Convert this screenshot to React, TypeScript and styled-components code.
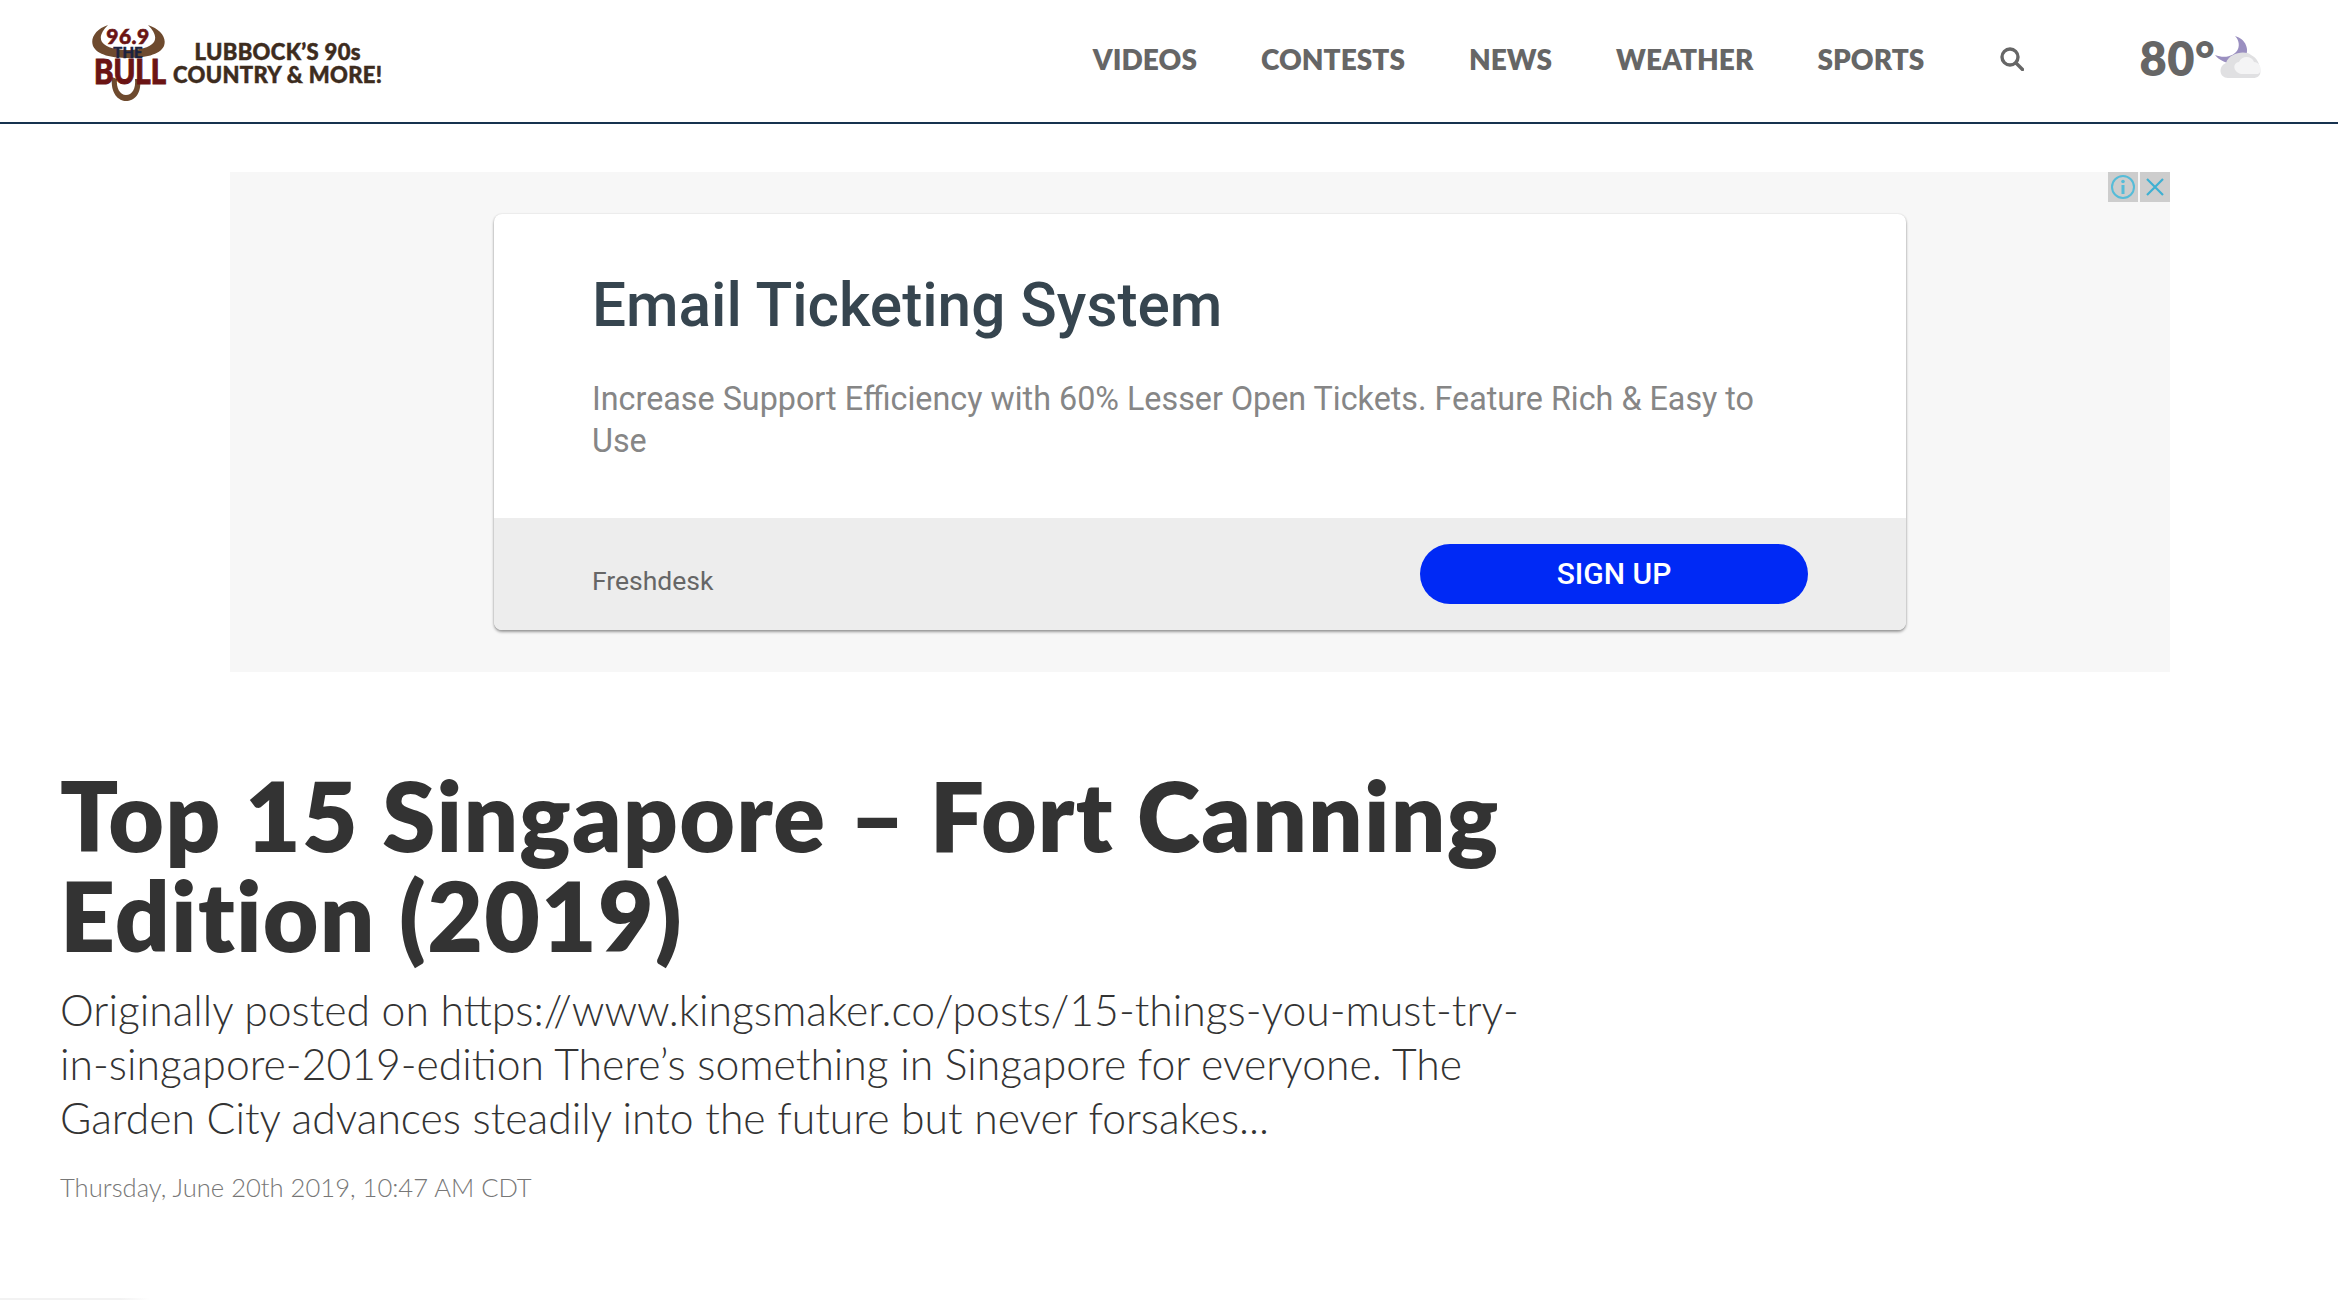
import React from "react";
import styled, { createGlobalStyle } from "styled-components";

const Global = createGlobalStyle`
  html, body { margin: 0; padding: 0; background: #fff; overflow: hidden; }
  * { box-sizing: border-box; }
`;
const Page = styled.div`
  width: 2338px;
  height: 1300px;
  display: flex;
  flex-direction: column;
  position: relative;
  overflow: hidden;
`;
const Header = styled.header`
  height: 124px;
  flex: none;
  border-bottom: 2px solid #17324f;
  display: flex;
  align-items: center;
  padding: 0 76px 0 92px;
`;
const LogoLink = styled.a`
  display: flex;
  align-items: center;
  gap: 5px;
  margin-top: 4px;
`;
const Tagline = styled.div`
  font: 900 22px/23px Lato, sans-serif;
  color: #3d2c1e;
  text-align: center;
  letter-spacing: 0.35px;
  -webkit-text-stroke: 0.5px #3d2c1e;
`;
const Nav = styled.nav`
  margin-left: auto;
  margin-top: -4px;
  display: flex;
  align-items: center;
  gap: 64px;
`;
const NavLink = styled.a`
  font: 800 28px/1 Lato, sans-serif;
  color: #666;
  letter-spacing: 0.05px;
`;
const SearchIcon = styled.svg`
  width: 24px;
  height: 24px;
  margin-left: 12px;
`;
const Weather = styled.div`
  margin-left: 115px;
  margin-top: -6px;
  display: flex;
  align-items: center;
`;
const Temp = styled.span`
  font: 800 47px/1 Lato, sans-serif;
  color: #666;
  letter-spacing: 0.5px;
`;
const Main = styled.main`
  display: flex;
  flex-direction: column;
  padding: 48px 0 0 60px;
`;
const AdSlot = styled.section`
  width: 1940px;
  height: 500px;
  margin-left: 170px;
  background: #f7f7f7;
  display: flex;
  justify-content: center;
  align-items: flex-start;
  padding-top: 42px;
  position: relative;
`;
const AdBadges = styled.div`
  position: absolute;
  top: 0;
  right: 0;
  display: flex;
  gap: 2px;
`;
const AdBadge = styled.div`
  width: 30px;
  height: 30px;
  background: #cdcdcd;
  display: flex;
  align-items: center;
  justify-content: center;
`;
const AdCard = styled.div`
  width: 1412px;
  height: 416px;
  border-radius: 8px;
  background: #fff;
  box-shadow: 0 2px 3px rgba(0,0,0,.38), 0 0 2px rgba(0,0,0,.12);
  display: flex;
  flex-direction: column;
  overflow: hidden;
`;
const AdBody = styled.div`
  height: 304px;
  padding: 57px 98px 0;
`;
const AdTitle = styled.h2`
  margin: 0;
  font: 500 60.3px/70px Roboto, sans-serif;
  color: #36454f;
`;
const AdText = styled.p`
  margin: 37px 0 0;
  max-width: 1200px;
  font: 400 32.3px/42px Roboto, sans-serif;
  color: #868686;
`;
const AdFooter = styled.div`
  flex: 1;
  background: #ededed;
  display: flex;
  align-items: center;
  justify-content: space-between;
  padding: 0 98px;
`;
const Sponsor = styled.span`
  font: 400 26.5px/1 Roboto, sans-serif;
  color: #666;
  margin-top: 14px;
`;
const Cta = styled.a`
  width: 388px;
  height: 60px;
  border-radius: 30px;
  background: #0029f5;
  color: #fff;
  display: flex;
  align-items: center;
  justify-content: center;
  font: 500 30px/1 Roboto, sans-serif;
  margin-top: -1px;
`;
const Title = styled.h1`
  margin: 93px 0 0;
  width: 1500px;
  font: 800 96px/100px Lato, sans-serif;
  color: #333;
  letter-spacing: 1.2px;
`;
const Summary = styled.p`
  margin: 18px 0 0;
  width: 1490px;
  font: 300 42.7px/54px Lato, sans-serif;
  color: #333;
`;
const DateLine = styled.div`
  margin-top: 26px;
  font: 300 25.6px/32px Lato, sans-serif;
  color: #777;
`;
const Corner = styled.div`
  position: absolute;
  left: 0;
  bottom: 0;
  width: 150px;
  height: 2px;
  background: linear-gradient(90deg, #f2f2f2 80%, #fff);
`;

const Logo = () => (
  <svg width="76" height="78" viewBox="0 0 76 78">
    <path d="M16 1 C4 5 -2 14 1 22 C5 31 20 34 36 34 C52 34 68 31 72 22 C75 13 68 5 56 1 C62 7 65 13 62 18 C58 24 46 26 36 26 C26 26 14 24 10 18 C7 13 10 7 16 1Z" fill="#6e4a2e" />
    <path d="M20 53 C18 70 27 77 34 77 C42 77 50 70 48 55 L43 55 C44 65 40 71 34 71 C28 71 24 64 25 55Z" fill="#6e4a2e" />
    <text x="36" y="20" textAnchor="middle" fontFamily="Lato, sans-serif" fontWeight="900" fontSize="21" fill="#6b1414" stroke="#6b1414" strokeWidth="0.6" letterSpacing="0.5">96.9</text>
    <text x="36" y="34" textAnchor="middle" fontFamily="Lato, sans-serif" fontWeight="900" fontSize="15" fill="#1b2240" stroke="#1b2240" strokeWidth="0.4">THE</text>
    <text x="2" y="60" fontFamily="Lato, sans-serif" fontWeight="900" fontSize="34" fill="#6b1414" stroke="#6b1414" strokeWidth="1" textLength="72" lengthAdjust="spacingAndGlyphs">BULL</text>
  </svg>
);

const MoonCloud = () => (
  <svg width="47" height="44" viewBox="0 0 47 44">
    <path d="M20 0 C31 3 35 14 30 22 C24 30 8 29 0 19 C10 23 20 20 23 13 C25 8 23 3 20 0Z" fill="#9a8fc0" />
    <path d="M13 42 C4 42 3 30 11 27 C14 17 30 14 36 19 C42 22 44 27 45 32 C47 40 42 42 38 42Z" fill="#e0e0e2" />
    <path d="M26 38 C18 36 17 27 24 26 C27 19 37 20 39 26 C46 26 48 36 43 38Z" fill="#f4f4f5" />
  </svg>
);

export default function App() {
  return (
    <Page>
      <Global />
      <Header>
        <LogoLink>
          <Logo />
          <Tagline>LUBBOCK’S 90s<br />COUNTRY &amp; MORE!</Tagline>
        </LogoLink>
        <Nav>
          {["VIDEOS", "CONTESTS", "NEWS", "WEATHER", "SPORTS"].map((n) => (
            <NavLink key={n}>{n}</NavLink>
          ))}
          <SearchIcon viewBox="0 0 24 24" fill="none" stroke="#666" strokeWidth="3.4">
            <circle cx="10" cy="10" r="8" />
            <path d="M16 16 L22.5 22.5" strokeLinecap="round" />
          </SearchIcon>
        </Nav>
        <Weather>
          <Temp>80°</Temp>
          <MoonCloud />
        </Weather>
      </Header>
      <Main>
        <AdSlot>
          <AdBadges>
            <AdBadge>
              <svg width="26" height="26" viewBox="0 0 26 26" fill="none">
                <circle cx="13" cy="13" r="11" stroke="#56bcd8" strokeWidth="2" />
                <rect x="11.5" y="11" width="3" height="9" fill="#56bcd8" />
                <circle cx="13" cy="7.5" r="1.8" fill="#56bcd8" />
              </svg>
            </AdBadge>
            <AdBadge>
              <svg width="20" height="20" viewBox="0 0 20 20" stroke="#3eb0d2" strokeWidth="2.2">
                <path d="M2 2 L18 18 M18 2 L2 18" />
              </svg>
            </AdBadge>
          </AdBadges>
          <AdCard>
            <AdBody>
              <AdTitle>Email Ticketing System</AdTitle>
              <AdText>Increase Support Efficiency with 60% Lesser Open Tickets. Feature Rich &amp; Easy to Use</AdText>
            </AdBody>
            <AdFooter>
              <Sponsor>Freshdesk</Sponsor>
              <Cta>SIGN UP</Cta>
            </AdFooter>
          </AdCard>
        </AdSlot>
        <Title>Top 15 Singapore – Fort Canning Edition (2019)</Title>
        <Summary>Originally posted on https://www.kingsmaker.co/posts/15-things-you-must-try-in-singapore-2019-edition There’s something in Singapore for everyone. The Garden City advances steadily into the future but never forsakes...</Summary>
        <DateLine>Thursday, June 20th 2019, 10:47 AM CDT</DateLine>
      </Main>
      <Corner />
    </Page>
  );
}
